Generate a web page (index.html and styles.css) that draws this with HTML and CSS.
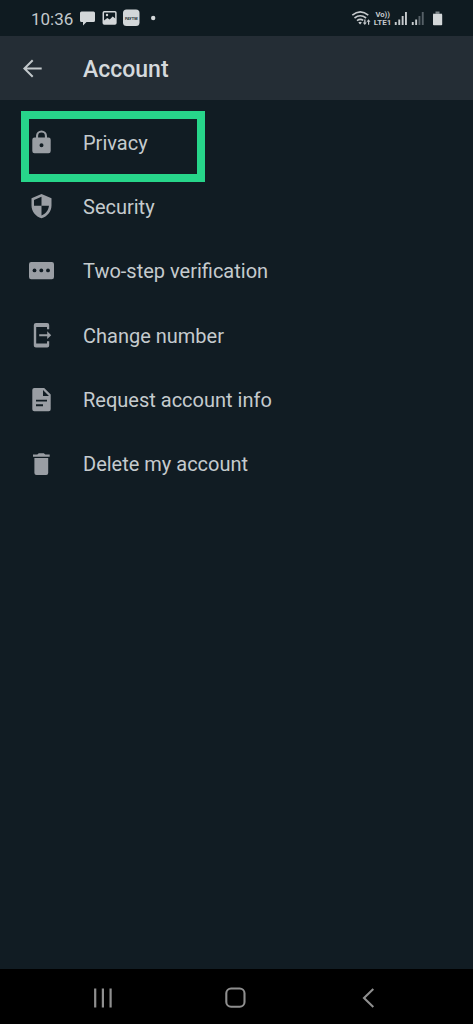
FILE: index.html
```html
<!DOCTYPE html>
<html lang="en">
<head>
<meta charset="utf-8">
<title>Account</title>
<link rel="stylesheet" href="styles.css">
</head>
<body>
<div class="screen">
  <div class="status">
    <span class="clock">10:36</span>
    <svg class="notices" width="78" height="18" viewBox="80 9 78 18">
      <path fill="#d3d7d9" d="M81.500 11.500h12q1.500 0 1.500 1.500v7.500q0 1.500-1.500 1.500h-7l-3.500 3.500v-3.500h-1.500q-1.500 0-1.500-1.500V13q0-1.500 1.500-1.500z"/>
      <rect x="103.300" y="11.700" width="12.600" height="12.200" rx="1" fill="none" stroke="#d3d7d9" stroke-width="1.500"/>
      <path fill="#d3d7d9" d="M104 20.500l3.300-2.600 2.400 1.600 3-3 3.300 2.500v5h-12z"/>
      <circle cx="107" cy="15" r="1.200" fill="#d3d7d9"/>
      <rect x="123" y="9.500" width="16.500" height="16.500" rx="3.500" fill="#d3d7d9"/>
      <text x="131.200" y="19.600" class="app-label" textLength="12.500" lengthAdjust="spacingAndGlyphs">PAYTM</text>
      <circle cx="153.200" cy="18" r="2.200" fill="#d3d7d9"/>
    </svg>
    <svg class="signals" width="96" height="18" viewBox="350 9 96 18">
      <g fill="none" stroke="#c6cacd" stroke-width="1.600">
        <path d="M352.300 15.200q8-6.600 16 0M354.500 18q5.800-4.600 11.600 0M357 20.600q3.300-2.400 6.200-.2"/>
      </g>
      <path fill="#c6cacd" d="M358.300 22.500q1.800-1.400 3.600 0l-1.800 2zM364.200 19.500h1.300v3h1.300l-2 2.500-2-2.500h1.400zM368 24.800h1.200v-3h1.300l-2-2.500-2 2.500h1.500z"/>
      <text x="375.500" y="16.900" class="volte" textLength="14.500" lengthAdjust="spacingAndGlyphs">Vo))</text>
      <text x="373.800" y="25" class="volte" textLength="17.500" lengthAdjust="spacingAndGlyphs">LTE1</text>
      <path fill="#c6cacd" d="M394.800 22h1.900v3h-1.900zM398.300 19.500h1.900V25h-1.900zM401.700 16h1.900v9h-1.900zM405 12h1.900v13H405zM411.800 22h1.900v3h-1.900zM415.200 19.500h1.900V25h-1.900z"/>
      <path fill="#566067" d="M418.500 16h1.900v9h-1.900zM421.800 12h1.900v13h-1.900z"/>
      <path fill="#80888c" d="M435.500 11.500h4v2h2.500v2h-9v-2h2.500z"/>
      <rect x="433" y="14" width="9.200" height="11.200" rx=".8" fill="#d3d7d9"/>
    </svg>
  </div>
  <header class="header">
    <svg class="back" width="22" height="22" viewBox="0 0 22 22"><path d="M19.700 10.500H3M10.700 2.200L2.400 10.500l8.300 8.300" fill="none" stroke="#c2c8cb" stroke-width="2"/></svg>
    <h1 class="title">Account</h1>
  </header>
  <ul class="menu">
    <li class="row selected">
      <svg class="icon" viewBox="25 127 34 32"><path fill="#9a9ea4" fill-rule="evenodd" d="M36 137.500V136a5.500 5.500 0 0 1 11 0v1.500h1.500q2.200 0 2.200 2.200v11.300q0 2.200-2.200 2.200h-14q-2.200 0-2.200-2.200v-11.300q0-2.200 2.200-2.200zM38.100 137.500h6.800V136a3.400 3.400 0 0 0-6.800 0zM41.500 143.300a2 2 0 1 0 0 4 2 2 0 0 0 0-4z"/></svg>
      <span class="label">Privacy</span>
    </li>
    <li class="row">
      <svg class="icon" viewBox="25 191 34 32"><path fill="#9a9ea4" fill-rule="evenodd" d="M41.500 194l10 4.200v7.300c0 6-4.200 11.200-10 12.700-5.800-1.500-10-6.700-10-12.700v-7.300zM41.500 196.800l-7.500 3.200v5.800h7.500zM41.500 205.800v9.700c4-1.400 7-5.300 7.500-9.700z"/></svg>
      <span class="label">Security</span>
    </li>
    <li class="row">
      <svg class="icon" viewBox="25 255 34 32"><rect x="29" y="262" width="25" height="17.200" rx="2.200" fill="#9a9ea4"/><g fill="#111c23"><circle cx="34.500" cy="270.400" r="1.900"/><circle cx="41.300" cy="270.400" r="1.900"/><circle cx="48" cy="270.400" r="1.900"/></g></svg>
      <span class="label">Two-step verification</span>
    </li>
    <li class="row">
      <svg class="icon" viewBox="25 320 34 32"><path fill="#9a9ea4" d="M36 323h11.200q2 0 2 2v4.300H47V327H36.200v16.500H47v-2.300h2.200v4.300q0 2-2 2H36q-2.200 0-2.200-2v-20.500q0-2 2.200-2z"/><path fill="#9a9ea4" d="M39.200 334.200h8v-2.900l4 3.900-4 3.900v-2.900h-8z"/></svg>
      <span class="label">Change number</span>
    </li>
    <li class="row">
      <svg class="icon" viewBox="25 384 34 32"><path fill="#9a9ea4" fill-rule="evenodd" d="M34.300 388h9.900l6.500 6.500v14.700q0 2-2 2H34.300q-2 0-2-2V390q0-2 2-2zM43 389.900v6h6zM36 399.700v1.900h11v-1.900zM36 404.300v1.900h7v-1.900z"/></svg>
      <span class="label">Request account info</span>
    </li>
    <li class="row">
      <svg class="icon" viewBox="25 448 34 32"><path fill="#9a9ea4" d="M33 454.500h4.300l1.500-1.200h5l1.500 1.200h4.400v2.200H33zM34.400 458h13.800v15q0 2-2 2h-9.800q-2 0-2-2z"/></svg>
      <span class="label">Delete my account</span>
    </li>
  </ul>
  <nav class="navbar">
    <svg width="20" height="22" viewBox="0 0 20 22"><path d="M2.200 1.500v19M9.900 1.500v19M17.600 1.500v19" stroke="#8f8f8f" stroke-width="2.200"/></svg>
    <svg width="22" height="22" viewBox="1.500 0.500 22 22"><rect x="1.800" y="2" width="18.200" height="18.200" rx="4.800" fill="none" stroke="#8f8f8f" stroke-width="2.100"/></svg>
    <svg width="14" height="22" viewBox="0 0 14 22"><path d="M12.300 2L3 11l9.300 9" fill="none" stroke="#8f8f8f" stroke-width="2.100"/></svg>
  </nav>
</div>
</body>
</html>
```
FILE: styles.css
```css
* { box-sizing: border-box; }
body {
  margin: 0;
  background: #111c23;
  font-family: Roboto, "Liberation Sans", sans-serif;
}
.screen {
  display: flex;
  flex-direction: column;
  height: 1024px;
  width: 473px;
}
.status {
  display: flex;
  align-items: center;
  height: 36px;
  padding: 0 27px 0 31px;
  background: #0f1b21;
}
.clock {
  width: 49px;
  color: #c3c9cc;
  font-size: 17px;
  line-height: 20px;
  padding-top: 1px;
}
.signals { margin-left: auto; }
.app-label {
  font: 900 4px Roboto, sans-serif;
  text-anchor: middle;
  fill: #303a40;
}
.volte {
  font: 700 7px Roboto, sans-serif;
  fill: #c6cacd;
}
.header {
  display: flex;
  align-items: center;
  height: 64px;
  padding: 1px 0 0 22px;
  background: #242d35;
}
.title {
  margin: 3px 0 0 39px;
  color: #d5d9dc;
  font-size: 23px;
  font-weight: 500;
  line-height: 28px;
}
.menu {
  flex: 1;
  margin: 0;
  padding: 11px 20px 0 21px;
  list-style: none;
}
.row {
  position: relative;
  display: flex;
  align-items: center;
  height: 64.2px;
  padding-left: 4px;
}
.selected::before {
  content: "";
  box-sizing: border-box;
  position: absolute;
  top: 0;
  left: 0;
  width: 184px;
  height: 71px;
  border: 8px solid #27d58a;
}
.icon {
  width: 34px;
  height: 32px;
}
.label {
  margin-left: 24px;
  color: #c5cbce;
  font-size: 20px;
  line-height: 24px;
}
.navbar {
  display: flex;
  justify-content: space-between;
  align-items: center;
  height: 55px;
  padding: 3px 98px 0 93px;
  background: #000;
}
.navbar svg { overflow: visible; }
```
